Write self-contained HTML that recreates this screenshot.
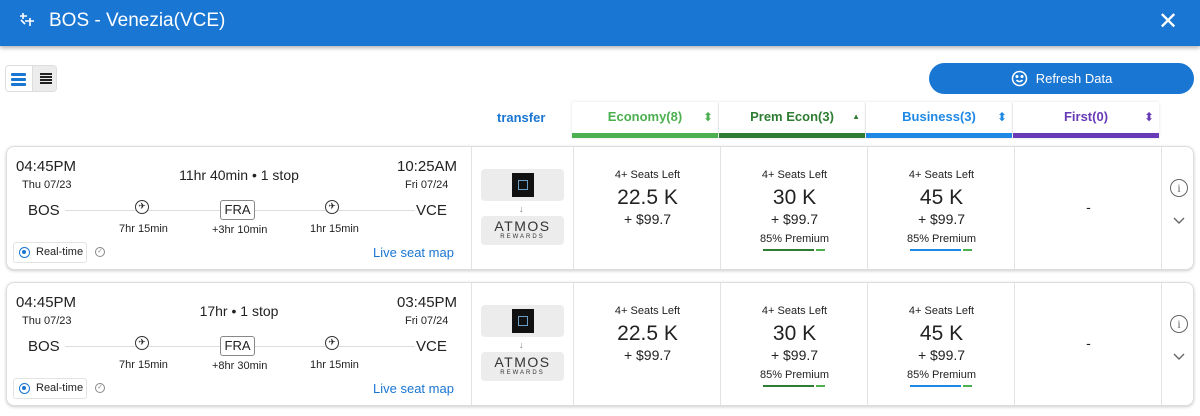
<!DOCTYPE html><html><head><style>
*{box-sizing:border-box;margin:0;padding:0}
body{width:1200px;height:416px;background:#fff;font-family:"Liberation Sans",Arial,sans-serif;color:#222;position:relative;overflow:hidden}
.abs{position:absolute}
.hdr{left:0;top:0;width:1200px;height:46px;background:#1976d2;box-shadow:0 2px 4px rgba(0,0,0,.3)}
.card{left:6px;width:1188px;height:124px;border:1px solid #ddd;border-radius:8px;box-shadow:0 1px 3px rgba(0,0,0,.2);background:#fff}
.col{top:0;height:122px;border-left:1px solid #e3e3e3;text-align:center}
.t{position:absolute;white-space:nowrap}
.th{top:102px;height:36px;width:146px;background:#fff;box-shadow:0 0 3px rgba(0,0,0,.12);font-size:13px;font-weight:bold;text-align:center;line-height:30px}
.th .bar{position:absolute;left:0;bottom:0;width:100%;height:5px}
.th .s{position:absolute;right:5px;top:0;font-size:12px;line-height:30px;font-weight:normal}
</style></head><body>
<div class="abs hdr">
<svg class="abs" style="left:18px;top:11px" width="18" height="18" viewBox="0 0 18 18" fill="none" stroke="#fff" stroke-width="1.6"><path d="M2 5h7M5 2v6M7 10h9M12 7v8M3 9l4 4"/></svg>
<div class="t" style="left:49px;top:10px;color:#fff;font-size:19px">BOS - Venezia(VCE)</div>
<div class="t" style="left:1158px;top:7px;color:#fff;font-size:24px">✕</div>
</div>
<div class="abs" style="left:5px;top:65px;width:52px;height:27px;border:1px solid #ddd;border-radius:4px;overflow:hidden">
<div class="abs" style="left:0;top:0;width:26px;height:27px;background:#fff"><div class="abs" style="left:5px;top:7px;width:15px;height:3px;background:#1976d2;border-radius:1px;box-shadow:0 5px 0 #1976d2,0 10px 0 #1976d2"></div></div>
<div class="abs" style="left:26px;top:0;width:26px;height:27px;background:#ececec;border-left:1px solid #ddd"><div class="abs" style="left:7px;top:7px;width:12px;height:1.5px;background:#222;box-shadow:0 3px 0 #222,0 6px 0 #222,0 9px 0 #222"></div></div>
</div>
<div class="abs" style="left:929px;top:63px;width:265px;height:31px;background:#1976d2;border-radius:16px;color:#fff;font-size:13px;line-height:31px;text-align:center"><svg style="vertical-align:-4px;margin-right:8px" width="17" height="17" viewBox="0 0 17 17" fill="none" stroke="#fff" stroke-width="1.5"><circle cx="8.5" cy="8.5" r="7"/><path d="M5.5 10c1.5 2 4.5 2 6 0"/><circle cx="6" cy="6.5" r=".8" fill="#fff"/><circle cx="11" cy="6.5" r=".8" fill="#fff"/></svg>Refresh Data</div>
<div class="t" style="left:497px;top:110px;color:#1976d2;font-weight:bold;font-size:13px">transfer</div>
<div class="abs th" style="left:572px;color:#4caf50">Economy(8)<span class="s">⬍</span><div class="bar" style="background:#4caf50"></div></div>
<div class="abs th" style="left:719px;color:#2e7d32">Prem Econ(3)<span class="s" style="font-size:8px">▲</span><div class="bar" style="background:#2e7d32"></div></div>
<div class="abs th" style="left:866px;color:#1e88e5">Business(3)<span class="s">⬍</span><div class="bar" style="background:#1e88e5"></div></div>
<div class="abs th" style="left:1013px;color:#673ab7">First(0)<span class="s">⬍</span><div class="bar" style="background:#673ab7"></div></div>

<div class="abs card" style="top:146px">
<div class="t" style="left:9px;top:11px;font-size:15px">04:45PM</div>
<div class="t" style="left:15px;top:32px;font-size:11px">Thu 07/23</div>
<div class="t" style="left:0;width:464px;text-align:center;top:20px;font-size:14px">11hr 40min • 1 stop</div>
<div class="t" style="left:390px;top:11px;font-size:15px">10:25AM</div>
<div class="t" style="left:398px;top:32px;font-size:11px">Fri 07/24</div>
<div class="abs" style="left:58px;top:63px;width:350px;height:1px;background:#ddd"></div>
<div class="t" style="left:21px;top:55px;font-size:15px">BOS</div>
<div class="t" style="left:409px;top:55px;font-size:15px">VCE</div>
<div class="abs" style="left:128px;top:53px;width:14px;height:14px;border:1.3px solid #333;border-radius:50%;background:#fff;font-size:9px;line-height:11px;text-align:center">✈</div>
<div class="abs" style="left:318px;top:53px;width:14px;height:14px;border:1.3px solid #333;border-radius:50%;background:#fff;font-size:9px;line-height:11px;text-align:center">✈</div>
<div class="abs" style="left:213px;top:53px;width:35px;height:20px;border:1px solid #888;border-radius:3px;background:#fff;font-size:13px;line-height:18px;text-align:center">FRA</div>
<div class="t" style="left:112px;top:76px;font-size:11px">7hr 15min</div>
<div class="t" style="left:205px;top:77px;font-size:11px">+3hr 10min</div>
<div class="t" style="left:303px;top:76px;font-size:11px">1hr 15min</div>
<div class="abs" style="left:6px;top:95px;width:74px;height:21px;border:1px solid #e3e3e3;border-radius:3px;font-size:11px;line-height:19px;padding-left:22px">Real-time<span class="abs" style="left:5px;top:4px;width:11px;height:11px;border:1.5px solid #1976d2;border-radius:50%"><span class="abs" style="left:2px;top:2px;width:4px;height:4px;background:#1976d2;border-radius:50%"></span></span></div>
<div class="abs" style="left:88px;top:100px;width:10px;height:10px;border:1px solid #888;border-radius:50%;font-size:7px;line-height:8px;text-align:center;color:#888">✓</div>
<div class="t" style="left:366px;top:98px;font-size:13px;color:#1976d2">Live seat map</div>
<div class="abs col" style="left:464px;width:102px">
<div class="abs" style="left:9px;top:22px;width:83px;height:32px;background:#ececec;border-radius:4px"><div class="abs" style="left:31px;top:4px;width:22px;height:24px;background:#111"><div class="abs" style="left:6px;top:7px;width:10px;height:10px;border:1px solid #6aa0c8"></div></div></div>
<div class="t" style="left:47px;top:57px;font-size:9px;color:#777">↓</div>
<div class="abs" style="left:9px;top:69px;width:83px;height:29px;background:#ececec;border-radius:4px;color:#333"><div class="t" style="left:0;width:83px;top:2px;font-size:14px;letter-spacing:1.5px">ATMOS</div><div class="t" style="left:0;width:83px;top:18px;font-size:6px;letter-spacing:2px">REWARDS</div></div>
</div>
<div class="abs col" style="left:566px;width:147px"><div class="t" style="left:0;width:147px;top:22px;font-size:11px">4+ Seats Left</div><div class="t" style="left:0;width:147px;top:39px;font-size:21px">22.5 K</div><div class="t" style="left:0;width:147px;top:64px;font-size:14px">+ $99.7</div></div>
<div class="abs col" style="left:713px;width:147px"><div class="t" style="left:0;width:147px;top:22px;font-size:11px">4+ Seats Left</div><div class="t" style="left:0;width:147px;top:39px;font-size:21px">30 K</div><div class="t" style="left:0;width:147px;top:64px;font-size:14px">+ $99.7</div><div class="t" style="left:0;width:147px;top:86px;font-size:11px">85% Premium</div><div class="abs" style="left:42px;top:102px;width:51px;height:2px;background:#2e7d32"></div><div class="abs" style="left:95px;top:102px;width:9px;height:2px;background:#4caf50"></div></div>
<div class="abs col" style="left:860px;width:147px"><div class="t" style="left:0;width:147px;top:22px;font-size:11px">4+ Seats Left</div><div class="t" style="left:0;width:147px;top:39px;font-size:21px">45 K</div><div class="t" style="left:0;width:147px;top:64px;font-size:14px">+ $99.7</div><div class="t" style="left:0;width:147px;top:86px;font-size:11px">85% Premium</div><div class="abs" style="left:42px;top:102px;width:51px;height:2px;background:#1e88e5"></div><div class="abs" style="left:95px;top:102px;width:9px;height:2px;background:#4caf50"></div></div>
<div class="abs col" style="left:1007px;width:147px"><div class="t" style="left:0;width:147px;top:52px;font-size:14px">-</div></div>
<div class="abs col" style="left:1154px;width:34px">
<div class="abs" style="left:8px;top:32px;width:18px;height:18px;border:1.3px solid #666;border-radius:50%;font-size:12px;line-height:16px;text-align:center;color:#666;font-family:'Liberation Serif',serif">i</div>
<svg class="abs" style="left:11px;top:70px" width="12" height="8" viewBox="0 0 12 8"><path d="M1 1l5 5 5-5" fill="none" stroke="#666" stroke-width="1.4"/></svg>
</div>
</div>

<div class="abs card" style="top:282px">
<div class="t" style="left:9px;top:11px;font-size:15px">04:45PM</div>
<div class="t" style="left:15px;top:32px;font-size:11px">Thu 07/23</div>
<div class="t" style="left:0;width:464px;text-align:center;top:20px;font-size:14px">17hr • 1 stop</div>
<div class="t" style="left:390px;top:11px;font-size:15px">03:45PM</div>
<div class="t" style="left:398px;top:32px;font-size:11px">Fri 07/24</div>
<div class="abs" style="left:58px;top:63px;width:350px;height:1px;background:#ddd"></div>
<div class="t" style="left:21px;top:55px;font-size:15px">BOS</div>
<div class="t" style="left:409px;top:55px;font-size:15px">VCE</div>
<div class="abs" style="left:128px;top:53px;width:14px;height:14px;border:1.3px solid #333;border-radius:50%;background:#fff;font-size:9px;line-height:11px;text-align:center">✈</div>
<div class="abs" style="left:318px;top:53px;width:14px;height:14px;border:1.3px solid #333;border-radius:50%;background:#fff;font-size:9px;line-height:11px;text-align:center">✈</div>
<div class="abs" style="left:213px;top:53px;width:35px;height:20px;border:1px solid #888;border-radius:3px;background:#fff;font-size:13px;line-height:18px;text-align:center">FRA</div>
<div class="t" style="left:112px;top:76px;font-size:11px">7hr 15min</div>
<div class="t" style="left:205px;top:77px;font-size:11px">+8hr 30min</div>
<div class="t" style="left:303px;top:76px;font-size:11px">1hr 15min</div>
<div class="abs" style="left:6px;top:95px;width:74px;height:21px;border:1px solid #e3e3e3;border-radius:3px;font-size:11px;line-height:19px;padding-left:22px">Real-time<span class="abs" style="left:5px;top:4px;width:11px;height:11px;border:1.5px solid #1976d2;border-radius:50%"><span class="abs" style="left:2px;top:2px;width:4px;height:4px;background:#1976d2;border-radius:50%"></span></span></div>
<div class="abs" style="left:88px;top:100px;width:10px;height:10px;border:1px solid #888;border-radius:50%;font-size:7px;line-height:8px;text-align:center;color:#888">✓</div>
<div class="t" style="left:366px;top:98px;font-size:13px;color:#1976d2">Live seat map</div>
<div class="abs col" style="left:464px;width:102px">
<div class="abs" style="left:9px;top:22px;width:83px;height:32px;background:#ececec;border-radius:4px"><div class="abs" style="left:31px;top:4px;width:22px;height:24px;background:#111"><div class="abs" style="left:6px;top:7px;width:10px;height:10px;border:1px solid #6aa0c8"></div></div></div>
<div class="t" style="left:47px;top:57px;font-size:9px;color:#777">↓</div>
<div class="abs" style="left:9px;top:69px;width:83px;height:29px;background:#ececec;border-radius:4px;color:#333"><div class="t" style="left:0;width:83px;top:2px;font-size:14px;letter-spacing:1.5px">ATMOS</div><div class="t" style="left:0;width:83px;top:18px;font-size:6px;letter-spacing:2px">REWARDS</div></div>
</div>
<div class="abs col" style="left:566px;width:147px"><div class="t" style="left:0;width:147px;top:22px;font-size:11px">4+ Seats Left</div><div class="t" style="left:0;width:147px;top:39px;font-size:21px">22.5 K</div><div class="t" style="left:0;width:147px;top:64px;font-size:14px">+ $99.7</div></div>
<div class="abs col" style="left:713px;width:147px"><div class="t" style="left:0;width:147px;top:22px;font-size:11px">4+ Seats Left</div><div class="t" style="left:0;width:147px;top:39px;font-size:21px">30 K</div><div class="t" style="left:0;width:147px;top:64px;font-size:14px">+ $99.7</div><div class="t" style="left:0;width:147px;top:86px;font-size:11px">85% Premium</div><div class="abs" style="left:42px;top:102px;width:51px;height:2px;background:#2e7d32"></div><div class="abs" style="left:95px;top:102px;width:9px;height:2px;background:#4caf50"></div></div>
<div class="abs col" style="left:860px;width:147px"><div class="t" style="left:0;width:147px;top:22px;font-size:11px">4+ Seats Left</div><div class="t" style="left:0;width:147px;top:39px;font-size:21px">45 K</div><div class="t" style="left:0;width:147px;top:64px;font-size:14px">+ $99.7</div><div class="t" style="left:0;width:147px;top:86px;font-size:11px">85% Premium</div><div class="abs" style="left:42px;top:102px;width:51px;height:2px;background:#1e88e5"></div><div class="abs" style="left:95px;top:102px;width:9px;height:2px;background:#4caf50"></div></div>
<div class="abs col" style="left:1007px;width:147px"><div class="t" style="left:0;width:147px;top:52px;font-size:14px">-</div></div>
<div class="abs col" style="left:1154px;width:34px">
<div class="abs" style="left:8px;top:32px;width:18px;height:18px;border:1.3px solid #666;border-radius:50%;font-size:12px;line-height:16px;text-align:center;color:#666;font-family:'Liberation Serif',serif">i</div>
<svg class="abs" style="left:11px;top:70px" width="12" height="8" viewBox="0 0 12 8"><path d="M1 1l5 5 5-5" fill="none" stroke="#666" stroke-width="1.4"/></svg>
</div>
</div>
</body></html>
